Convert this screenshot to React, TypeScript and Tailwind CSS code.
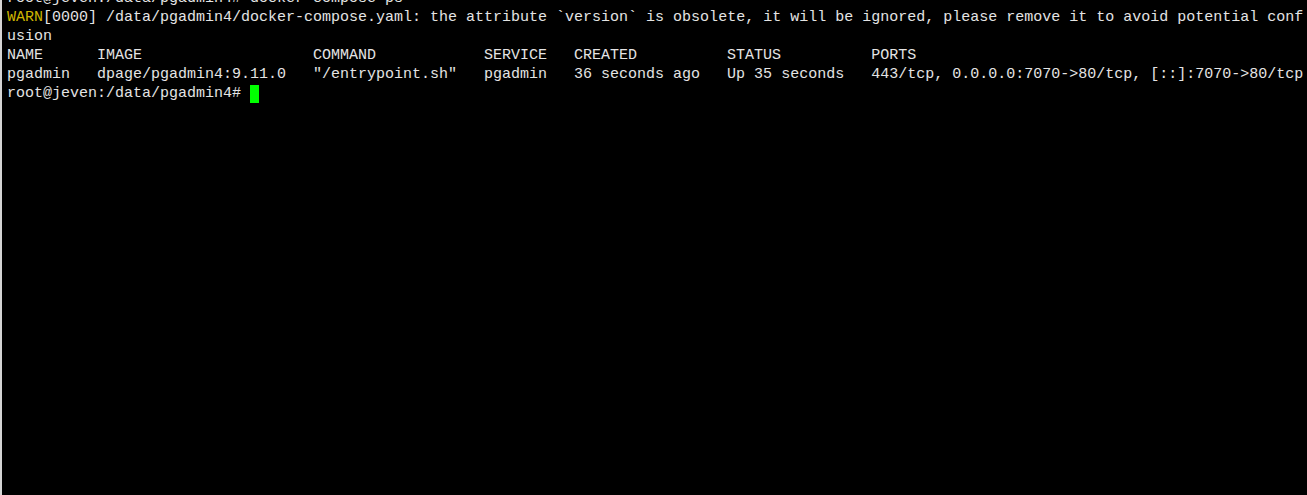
const rows = [
  "NAME      IMAGE                   COMMAND            SERVICE   CREATED          STATUS          PORTS",
  'pgadmin   dpage/pgadmin4:9.11.0   "/entrypoint.sh"   pgadmin   36 seconds ago   Up 35 seconds   443/tcp, 0.0.0.0:7070->80/tcp, [::]:7070->80/tcp',
];

export default function App() {
  return (
    <div className="h-[495px] w-[1307px] overflow-hidden bg-black border-l-2 border-[#d4d4d4]">
      <div
        className="pl-[5px] mt-[-11px] text-[15px] leading-[19px] text-[#e4e4e4] whitespace-pre"
        style={{ fontFamily: '"Liberation Mono", "DejaVu Sans Mono", monospace' }}
      >
        <div>root@jeven:/data/pgadmin4# docker compose ps</div>
        <div>
          <span className="text-[#cdb400]">WARN</span>
          [0000] /data/pgadmin4/docker-compose.yaml: the attribute `version` is obsolete, it will be ignored, please remove it to avoid potential conf
        </div>
        <div>usion</div>
        {rows.map((r) => (
          <div key={r}>{r}</div>
        ))}
        <div className="flex items-center">
          <span>root@jeven:/data/pgadmin4# </span>
          <span className="inline-block w-[9px] h-[18px] bg-[#00ff00]" />
        </div>
      </div>
    </div>
  );
}
